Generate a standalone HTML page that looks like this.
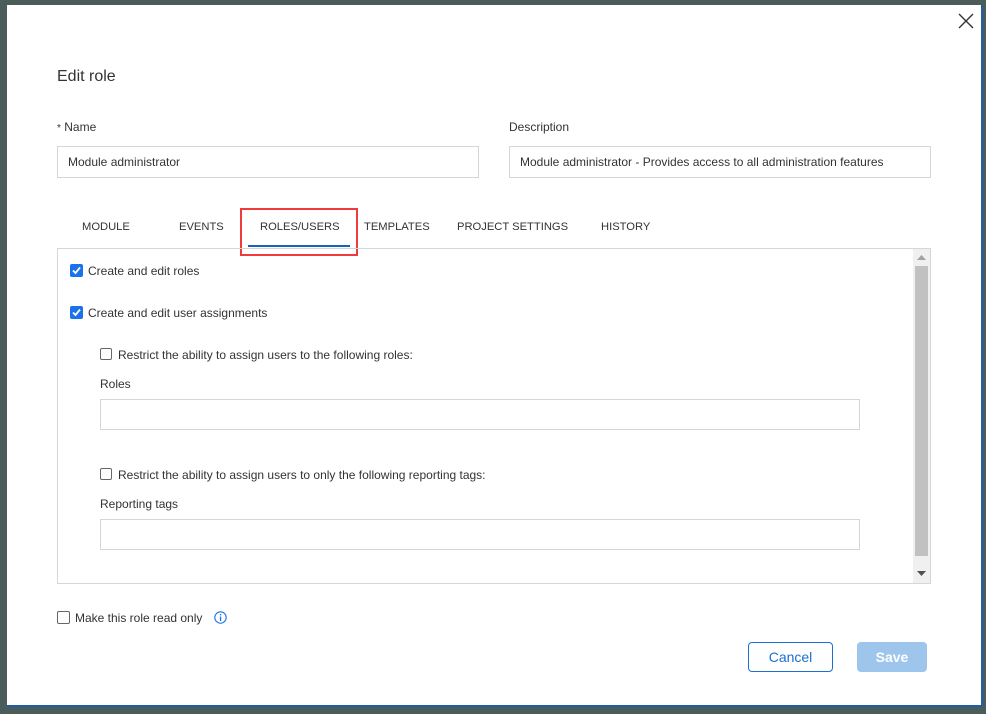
<!DOCTYPE html>
<html><head><style>
body{margin:0;width:986px;height:714px;background:#4b5d5a;position:relative;overflow:hidden;font-family:"Liberation Sans",Arial,sans-serif;color:#333;}
.a{position:absolute}
.dlg{left:7px;top:5px;width:976px;height:702px;background:#fff;border-right:2px solid #1f5fa8;border-bottom:2px solid #1f5fa8;box-sizing:border-box}
.lbl{font-size:12px;color:#333}
.inp{border:1px solid #d6d6d6;box-sizing:border-box;font-size:12px;color:#333;padding-left:10px;line-height:30px}
.tab{font-size:11.2px;color:#333;top:221px}
.cb{width:12px;height:12px;border:1px solid #666;border-radius:2px;box-sizing:border-box;background:#fff}
.t{font-size:12px;color:#333}
</style></head><body>
<div class="a dlg"></div>
<svg class="a" style="left:958px;top:13px" width="16" height="16"><path d="M1 1L15 15M15 1L1 15" stroke="#333" stroke-width="1.4"/></svg>
<div class="a" style="left:57px;top:68px;font-size:16px;color:#333">Edit role</div>
<div class="a lbl" style="left:57px;top:120px"><span style="font-size:10px">*</span> Name</div>
<div class="a lbl" style="left:509px;top:120px">Description</div>
<div class="a inp" style="left:57px;top:146px;width:422px;height:32px">Module administrator</div>
<div class="a inp" style="left:509px;top:146px;width:422px;height:32px">Module administrator - Provides access to all administration features</div>
<div class="a tab" style="left:82px">MODULE</div>
<div class="a tab" style="left:179px">EVENTS</div>
<div class="a tab" style="left:260px">ROLES/USERS</div>
<div class="a tab" style="left:364px">TEMPLATES</div>
<div class="a tab" style="left:457px">PROJECT SETTINGS</div>
<div class="a tab" style="left:601px">HISTORY</div>
<div class="a" style="left:248px;top:245px;width:102px;height:2px;background:#1565c0"></div>
<div class="a" style="left:240px;top:208px;width:118px;height:48px;border:2px solid #ef3b3b;box-sizing:border-box"></div>
<div class="a" style="left:57px;top:248px;width:874px;height:336px;border:1px solid #d6d6d6;box-sizing:border-box"></div>
<div class="a" style="left:913px;top:249px;width:17px;height:334px;background:#f0f0f0"></div>
<div class="a" style="left:915px;top:266px;width:13px;height:290px;background:#c1c1c1"></div>
<svg class="a" style="left:917px;top:255px" width="9" height="6"><path d="M0 5L4.5 0L9 5Z" fill="#a3a3a3"/></svg>
<svg class="a" style="left:917px;top:571px" width="9" height="6"><path d="M0 0L4.5 5L9 0Z" fill="#505050"/></svg>
<svg class="a" style="left:70px;top:264px" width="13" height="13"><rect width="13" height="13" rx="2" fill="#1a73e8"/><path d="M3 6.5L5.5 9L10 3.5" stroke="#fff" stroke-width="1.8" fill="none"/></svg>
<div class="a t" style="left:88px;top:264px">Create and edit roles</div>
<svg class="a" style="left:70px;top:306px" width="13" height="13"><rect width="13" height="13" rx="2" fill="#1a73e8"/><path d="M3 6.5L5.5 9L10 3.5" stroke="#fff" stroke-width="1.8" fill="none"/></svg>
<div class="a t" style="left:88px;top:306px">Create and edit user assignments</div>
<div class="a cb" style="left:100px;top:348px"></div>
<div class="a t" style="left:118px;top:348px">Restrict the ability to assign users to the following roles:</div>
<div class="a t" style="left:100px;top:377px">Roles</div>
<div class="a inp" style="left:100px;top:399px;width:760px;height:31px"></div>
<div class="a cb" style="left:100px;top:468px"></div>
<div class="a t" style="left:118px;top:468px">Restrict the ability to assign users to only the following reporting tags:</div>
<div class="a t" style="left:100px;top:497px">Reporting tags</div>
<div class="a inp" style="left:100px;top:519px;width:760px;height:31px"></div>
<div class="a cb" style="left:57px;top:611px;width:13px;height:13px"></div>
<div class="a t" style="left:75px;top:611px">Make this role read only</div>
<svg class="a" style="left:214px;top:611px" width="13" height="13"><circle cx="6.5" cy="6.5" r="5.7" stroke="#1a73e8" stroke-width="1.1" fill="none"/><rect x="5.9" y="5.5" width="1.3" height="4.5" fill="#1a73e8"/><rect x="5.9" y="3" width="1.3" height="1.4" fill="#1a73e8"/></svg>
<div class="a" style="left:748px;top:642px;width:85px;height:30px;border:1px solid #1a6fd0;border-radius:4px;box-sizing:border-box;color:#1a6fd0;font-size:14px;text-align:center;line-height:28px">Cancel</div>
<div class="a" style="left:857px;top:642px;width:70px;height:30px;background:#9ec5ec;border-radius:4px;color:#fff;font-size:14px;font-weight:bold;text-align:center;line-height:30px">Save</div>
</body></html>
